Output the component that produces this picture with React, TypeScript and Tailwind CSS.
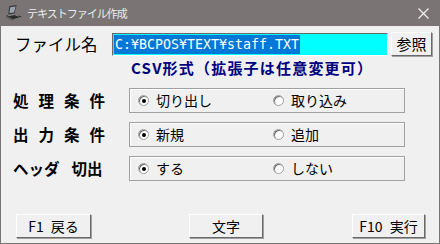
import React from 'react';

const JP = { fontFamily: '"Noto Sans CJK JP", "Noto Sans", sans-serif' };
const MONO = { fontFamily: '"DejaVu Sans Mono", "Noto Sans CJK JP", monospace' };

const PosIcon = () => (
  <svg width="18" height="18" viewBox="0 0 17 17">
    <path d="M4 2 L11 1 L9 9 L3 10 Z" fill="#3a3a3a" />
    <path d="M5 3 L10 2.4 L8.5 8 L4.2 8.6 Z" fill="#9aa4b0" />
    <path d="M1 11 L9 9.5 L16 12 L8 14.5 Z" fill="#2b2b2b" />
    <path d="M1 11 L8 14.5 L8 16 L1 12.5 Z" fill="#555" />
    <path d="M8 14.5 L16 12 L16 13.5 L8 16 Z" fill="#777" />
    <path d="M3 11 L9 10 L13 11.5" stroke="#c8c8c8" strokeWidth="0.6" fill="none" />
  </svg>
);

const Radio = ({ checked }: { checked?: boolean }) => (
  <span className="relative inline-block w-[11px] h-[11px] rounded-full bg-white border border-[#a0a0a0] shadow-[inset_1px_1px_0_#696969]">
    {checked && <span className="absolute left-[3px] top-[3px] w-[4px] h-[4px] rounded-full bg-black" />}
  </span>
);

const Button = ({ children, className = '' }: { children: React.ReactNode; className?: string }) => (
  <div
    className={`flex items-center justify-center h-[24px] bg-[#f0f0f0] border border-t-white border-l-white border-r-[#696969] border-b-[#696969] shadow-[1px_1px_0_#a0a0a0] text-[14px] text-black ${className}`}
    style={JP}
  >
    {children}
  </div>
);

type Row = { label: React.ReactNode; a: string; b: string };

const ROWS: Row[] = [
  { label: <span className="tracking-[10px] font-bold">処理条件</span>, a: '切り出し', b: '取り込み' },
  { label: <span className="tracking-[10px] font-bold">出力条件</span>, a: '新規', b: '追加' },
  {
    label: (
      <span className="font-bold">
        ヘッダ<span className="ml-[12px]">切出</span>
      </span>
    ),
    a: 'する',
    b: 'しない',
  },
];

export default function App() {
  return (
    <div className="w-[440px] h-[244px] bg-[#f0f0f0] flex flex-col overflow-hidden border-x border-b border-[#7a7574]" style={JP}>
      {/* title bar */}
      <div className="h-[26px] shrink-0 bg-[#7a7574] flex items-center pl-[4px] pr-[10px]">
        <PosIcon />
        <span className="ml-[4px] text-[11px] text-[#ececec] tracking-[-1px]">テキストファイル作成</span>
        <svg className="ml-auto" width="11" height="11" viewBox="0 0 11 11">
          <path d="M0.5 0.5 L10.5 10.5 M10.5 0.5 L0.5 10.5" stroke="#f2f2f2" strokeWidth="1.2" />
        </svg>
      </div>

      {/* file name */}
      <div className="mt-[6px] flex items-center h-[24px]">
        <span className="w-[111px] pl-[14px] text-[16.5px] text-black">ファイル名</span>
        <div className="w-[276px] h-[23px] bg-[#00ffff] border border-t-[#696969] border-l-[#696969] border-r-white border-b-white flex items-center pl-[1px]">
          <span className="bg-[#0078d7] text-white text-[13.3px] leading-[19px] px-[1px]" style={MONO}>
            C:¥BCPOS¥TEXT¥staff.TXT
          </span>
        </div>
        <Button className="ml-[3px] w-[41px] text-[15px]">参照</Button>
      </div>

      <div className="mt-[3px] pl-[130px] h-[18px] flex items-center text-[15px] font-bold text-[#000080] tracking-[1.2px]">
        CSV形式（拡張子は任意変更可）
      </div>

      {/* option rows */}
      <div className="mt-[11px] flex flex-col gap-[9px]">
        {ROWS.map((r, i) => (
          <div key={i} className="flex items-center h-[25px]">
            <span className="w-[128px] pl-[12px] text-[15.5px] text-black">{r.label}</span>
            <div className="w-[276px] h-[25px] border border-[#a0a0a0] shadow-[inset_1px_1px_0_#fff] flex items-center text-[14px] text-black">
              <div className="w-[143px] pl-[8px] flex items-center gap-[7px]">
                <Radio checked />
                <span>{r.a}</span>
              </div>
              <div className="flex items-center gap-[7px]">
                <Radio />
                <span>{r.b}</span>
              </div>
            </div>
          </div>
        ))}
      </div>

      {/* bottom buttons */}
      <div className="mt-auto mb-[5px] flex items-center pl-[15px]">
        <Button className="w-[75px]">
          F1<span className="ml-[7px]">戻る</span>
        </Button>
        <Button className="ml-[98px] w-[74px]">文字</Button>
        <Button className="ml-[89px] w-[73px]">
          F10<span className="ml-[7px]">実行</span>
        </Button>
      </div>
    </div>
  );
}
